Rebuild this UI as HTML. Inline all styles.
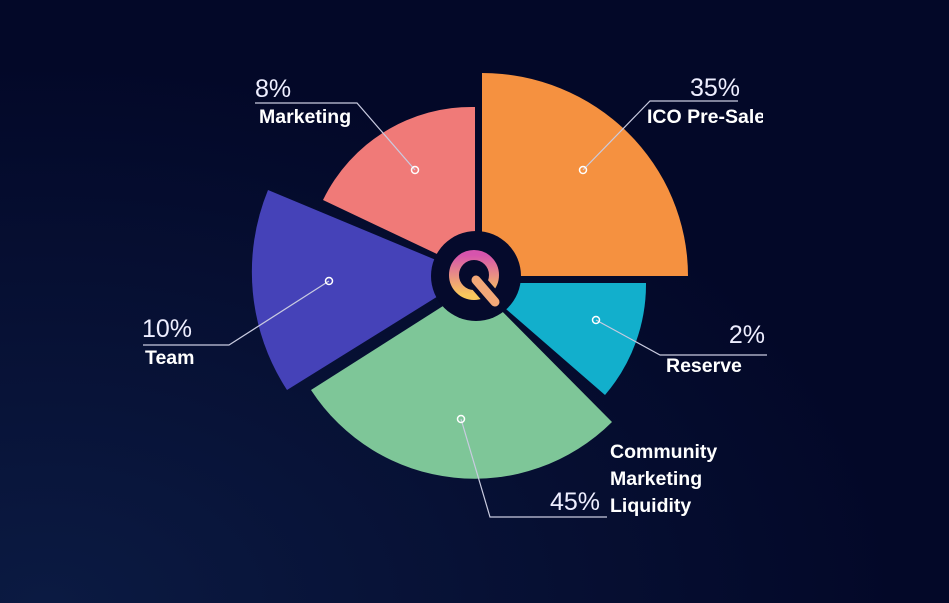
<!DOCTYPE html>
<html><head><style>
html,body{margin:0;padding:0;width:949px;height:603px;overflow:hidden;background:#040a2e}
svg{display:block}
text{font-family:"Liberation Sans",sans-serif;fill:#fff}
.p{font-size:25px;fill:#eef}
.l{font-size:19.5px;font-weight:bold}
</style></head><body>
<svg width="949" height="603" viewBox="0 0 949 603">
<defs>
<radialGradient id="bg" cx="0.05" cy="1" r="0.9">
<stop offset="0" stop-color="#0b1a42"/><stop offset="1" stop-color="#030828"/>
</radialGradient>
<linearGradient id="q" x1="0" y1="0" x2="0" y2="1">
<stop offset="0" stop-color="#d654ad"/><stop offset="1" stop-color="#f9c85c"/>
</linearGradient>
<clipPath id="c"><rect x="0" y="0" width="763" height="603"/></clipPath>
</defs>
<rect width="949" height="603" fill="url(#bg)"/>
<path d="M482,276 L482,73 A206,203 0 0 1 688,276 Z" fill="#f59140"/>
<path d="M476,283 L646,283 A170,170 0 0 1 605,395 Z" fill="#12afcc"/>
<path d="M476,285 L612,422 A195,195 0 0 1 311,390 Z" fill="#7ec698"/>
<path d="M472,275 L268,190 A216,216 0 0 0 287,390 Z" fill="#4542b8"/>
<path d="M475,272 L475,107 A165,165 0 0 0 323,200 Z" fill="#f07a78"/>
<circle cx="476" cy="276" r="45" fill="#050a2c"/>
<circle cx="474" cy="275" r="20" fill="none" stroke="url(#q)" stroke-width="10"/>
<line x1="476" y1="280" x2="495" y2="302" stroke="#050a2c" stroke-width="18" stroke-linecap="round"/>
<line x1="476" y1="280" x2="495" y2="302" stroke="#f3a878" stroke-width="9" stroke-linecap="round"/>
<g fill="none" stroke="#c9cbe0" stroke-width="1.2">
<polyline points="415,170 357,103 255,103"/>
<polyline points="583,170 650,101 738,101"/>
<polyline points="329,281 229,345 143,345"/>
<polyline points="596,320 660,355 767,355"/>
<polyline points="461,419 490,517 607,517"/>
</g>
<g fill="none" stroke="#fff" stroke-width="1.5">
<circle cx="415" cy="170" r="3.5"/><circle cx="583" cy="170" r="3.5"/>
<circle cx="329" cy="281" r="3.5"/><circle cx="596" cy="320" r="3.5"/>
<circle cx="461" cy="419" r="3.5"/>
</g>
<text class="p" x="255" y="97">8%</text>
<text class="l" x="259" y="123">Marketing</text>
<text class="p" x="740" y="96" text-anchor="end">35%</text>
<text class="l" x="647" y="123" clip-path="url(#c)">ICO Pre-Sale</text>
<text class="p" x="142" y="337">10%</text>
<text class="l" x="145" y="364">Team</text>
<text class="p" x="765" y="343" text-anchor="end">2%</text>
<text class="l" x="666" y="372">Reserve</text>
<text class="p" x="600" y="510" text-anchor="end">45%</text>
<text class="l" x="610" y="458">Community</text>
<text class="l" x="610" y="485">Marketing</text>
<text class="l" x="610" y="512">Liquidity</text>
</svg>
</body></html>
